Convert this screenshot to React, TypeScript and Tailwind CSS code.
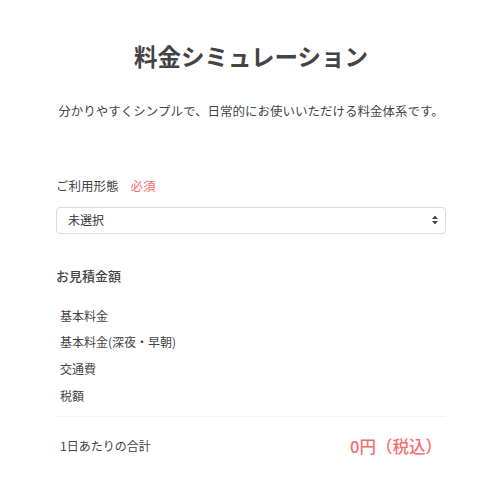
import { useState } from "react";

const lineItems = ["基本料金", "基本料金(深夜・早朝)", "交通費", "税額"];

export default function App() {
  const [plan, setPlan] = useState("");

  return (
    <div
      className="min-h-[500px] bg-white text-[#444]"
      style={{ fontFamily: '"Noto Sans CJK JP", "Noto Sans", sans-serif' }}
    >
      <div className="ml-[56px] w-[390px] pt-[36px]">
        <h1 className="text-center text-[23.5px] font-bold leading-[40px] text-[#444]">
          料金シミュレーション
        </h1>
        <p className="mt-[25px] text-center text-[12.5px] leading-[20px] text-[#444]">
          分かりやすくシンプルで、日常的にお使いいただける料金体系です。
        </p>

        <div className="mt-[55px] flex items-center gap-3 text-[12.5px] leading-[20px]">
          <span>ご利用形態</span>
          <span className="text-[#f46d6d]">必須</span>
        </div>

        <div className="relative mt-[10px]">
          <select
            value={plan}
            onChange={(e) => setPlan(e.target.value)}
            className="h-[27px] w-full appearance-none rounded-[4px] border border-[#dcdcdc] bg-white pl-[11px] pr-8 text-[12px] text-[#333] outline-none"
          >
            <option value="">未選択</option>
            <option value="day">日中</option>
            <option value="night">深夜・早朝</option>
          </select>
          <svg
            className="pointer-events-none absolute right-[8px] top-1/2 -translate-y-1/2"
            width="6"
            height="9"
            viewBox="0 0 6 9"
          >
            <path d="M3 0L6 3.5H0Z M3 9L0 5.5H6Z" fill="#444" />
          </svg>
        </div>

        <h2 className="mt-[32px] text-[13px] font-medium leading-[20px]">お見積金額</h2>

        <ul className="mt-[20px] space-y-[6.7px] pl-[4px] text-[12px] leading-[20px]">
          {lineItems.map((item) => (
            <li key={item}>{item}</li>
          ))}
        </ul>

        <div className="mt-[10px] border-t border-[#f4f2ea]" />

        <div className="flex items-center justify-between pb-[19px] pl-[4px] pr-[4px] pt-[17px]">
          <span className="text-[12px] leading-[20px]">1日あたりの合計</span>
          <span className="text-[16.5px] font-medium leading-[24px] text-[#f46d6d]">0円（税込）</span>
        </div>
      </div>
    </div>
  );
}
